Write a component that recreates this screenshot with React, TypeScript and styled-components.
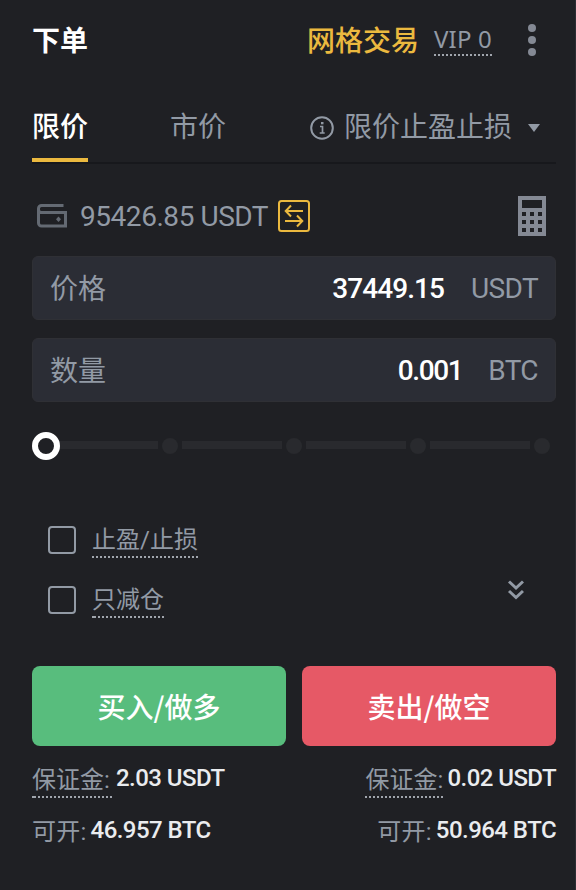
import React from "react";
import styled, { createGlobalStyle } from "styled-components";

const MUTED = "#929aa5";
const GOLD = "#ebb93f";

const Global = createGlobalStyle`
  * { box-sizing: border-box; }
  body { margin: 0; background: #1f2024; }
  button { font: inherit; border: 0; padding: 0; background: none; color: inherit; }
  svg { display: block; flex: none; }
`;

const Panel = styled.main`
  width: 576px;
  height: 890px;
  padding: 0 19px 0 32px;
  border-right: 1px solid #2b2d33;
  background: #1f2024;
  color: ${MUTED};
  font-family: Roboto, "Noto Sans CJK SC", sans-serif;
  font-size: 28px;
  line-height: 40px;
  overflow: hidden;
  white-space: nowrap;
`;

const Header = styled.header`
  display: flex;
  align-items: center;
  height: 80px;
  padding-right: 19px;
`;

const Title = styled.h1`
  margin: 0 auto 0 0;
  padding-top: 3px;
  color: #fff;
  font-size: 28px;
  font-weight: 700;
`;

const GridLink = styled.span`
  margin-right: 15px;
  padding-top: 4px;
  color: ${GOLD};
  font-weight: 500;
`;

/* Text with a dotted underline; the first dot is doubled when the width is a multiple of four. */
const Dotted = styled.span<{ $w: number; $h?: number; $line?: number }>`
  display: inline-block;
  width: ${(p) => p.$w}px;
  height: ${(p) => p.$h ?? 36}px;
  line-height: ${(p) => p.$line ?? 36}px;
  font-size: 24px;
  background:
    linear-gradient(#a0a5ad, #a0a5ad) left bottom / 2px 2px no-repeat,
    repeating-linear-gradient(90deg, #a0a5ad 0 2px, transparent 2px 4px)
      ${(p) => (p.$w % 4 === 0 ? 2 : 0)}px 100% / 100% 2px no-repeat;
`;

const Vip = styled(Dotted)`
  margin-right: 35px;
  font-family: "Noto Sans", sans-serif;
  letter-spacing: 0.2px;
`;

const Tabs = styled.nav`
  display: flex;
  height: 84px;
  border-bottom: 2px solid #17181c;
`;

const Tab = styled.div<{ $active?: boolean }>`
  width: 56px;
  height: 82px;
  margin-right: 82px;
  padding-top: 28px;
  color: ${(p) => (p.$active ? "#fff" : MUTED)};
  font-weight: ${(p) => (p.$active ? 500 : 400)};
  border-bottom: 4px solid ${(p) => (p.$active ? GOLD : "transparent")};
`;

const StopTab = styled.div`
  display: flex;
  align-items: center;
  height: 40px;
  margin: 28px 0 0 auto;
  padding-right: 16px;
`;

const StopLabel = styled.span`
  margin: 0 16px 0 10px;
`;

const Balance = styled.div`
  display: flex;
  align-items: center;
  height: 40px;
  margin: 32px 10px 20px 5px;
`;

const Amount = styled.span<{ $w: number }>`
  width: ${(p) => p.$w}px;
  margin: 0 9px 0 13px;
  padding-top: 2px;
  letter-spacing: -0.45px;
`;

const Swap = styled.button`
  margin-right: auto;
`;

const Field = styled.label`
  display: flex;
  align-items: center;
  height: 64px;
  margin-bottom: 18px;
  padding: 2px 17px 0;
  border: 1px solid #2f3035;
  border-radius: 6px;
  background: #2b2d35;
`;

const FieldName = styled.span`
  padding-top: 2px;
`;

const FieldValue = styled.span<{ $gap: number; $tracking: number }>`
  margin: 0 ${(p) => p.$gap}px 0 auto;
  color: #fff;
  font-weight: 500;
  letter-spacing: ${(p) => p.$tracking}px;
`;

const Unit = styled.span`
  letter-spacing: -0.6px;
`;

const Slider = styled.div`
  display: flex;
  align-items: center;
  height: 28px;
  margin: 30px 5px 0 0;
`;

const Knob = styled.span`
  width: 28px;
  height: 28px;
  border: 6px solid #fff;
  border-radius: 50%;
`;

const Track = styled.span<{ $first?: boolean }>`
  flex: ${(p) => (p.$first ? "0 0 98px" : "0 0 100px")};
  height: 8px;
  margin: -2px 4px 0 ${(p) => (p.$first ? 0 : 4)}px;
  background: #292a2e;
`;

const Stop = styled.span`
  flex: none;
  width: 16px;
  height: 16px;
  border-radius: 50%;
  background: #292a2e;
`;

const Options = styled.section`
  display: flex;
  align-items: flex-start;
  justify-content: space-between;
  height: 132px;
  margin: 62px 32px 0 16px;
`;

const Checks = styled.div`
  display: flex;
  flex-direction: column;
  gap: 24px;
`;

const Check = styled.label`
  display: flex;
  align-items: flex-start;
  height: 36px;
  gap: 16px;
`;

const Box = styled.span`
  width: 28px;
  height: 28px;
  margin-top: 4px;
  border: 2px solid ${MUTED};
  border-radius: 4px;
`;

const Expand = styled.button`
  margin-top: 58px;
`;

const Actions = styled.div`
  display: grid;
  grid-template-columns: 1fr 1fr;
  gap: 16px;
  margin-top: 12px;
`;

const Action = styled.button<{ $color: string }>`
  height: 80px;
  border-radius: 8px;
  background: ${(p) => p.$color};
  color: #fff;
  font-family: "Noto Sans CJK SC", sans-serif;
  font-weight: 500;
`;

const Summary = styled.div`
  display: flex;
  justify-content: space-between;
  margin-top: 16px;
  font-size: 24px;
  line-height: 36px;
`;

const Column = styled.div<{ $right?: boolean }>`
  display: flex;
  flex-direction: column;
  align-items: ${(p) => (p.$right ? "flex-end" : "flex-start")};
  gap: 16px;
`;

const Line = styled.div`
  display: flex;
  gap: 4px;
  height: 36px;
`;

const Available = styled.span`
  letter-spacing: 0.25px;
`;

const Figure = styled.span`
  color: #eaecef;
  font-weight: 500;
  line-height: 33px;
  letter-spacing: -0.55px;
`;

const Dots = () => (
  <svg width="10" height="34" viewBox="0 0 10 34" fill="#848994">
    {[5, 17, 29].map((y) => <circle key={y} cx="5" cy={y} r="4" />)}
  </svg>
);

const InfoIcon = () => (
  <svg width="24" height="24" viewBox="0 0 24 24" fill="none" stroke={MUTED} strokeWidth="2">
    <circle cx="12" cy="12" r="10.8" />
    <path d="M10 10.5h2.5V17M9.7 17h5" strokeWidth="1.7" />
    <path d="M11 6h2.5v2.3H11z" fill={MUTED} stroke="none" />
  </svg>
);

const WalletIcon = () => (
  <svg width="30" height="24" viewBox="0 0 30 24" fill="none" stroke="#646a73" strokeWidth="3">
    <path d="M26.5 1.5H4.5a3 3 0 0 0-3 3v14.5a3 3 0 0 0 3 3h24V8.5H4.5a3 3 0 0 1-3-3" />
    <path d="M21.5 12.5l2.5 2.7-2.5 2.7-2.5-2.7z" fill="#646a73" stroke="none" />
  </svg>
);

const SwapIcon = () => (
  <svg width="32" height="32" viewBox="0 0 32 32" fill="none" stroke={GOLD} strokeWidth="2">
    <rect x="1" y="1" width="30" height="30" rx="2.5" />
    <path d="M25 11H8M13 5.5L7.7 11l5.3 5.5M7 21h17M19 15.5l5.3 5.5-5.3 5.5" />
  </svg>
);

const CalculatorIcon = () => (
  <svg width="28" height="40" viewBox="0 0 28 40" fill="#848994">
    <rect width="28" height="40" />
    <rect x="4" y="4" width="20" height="8" fill="#1f2024" />
    {[16, 24, 32].map((y) => [4, 12, 20].map((x) => <rect key={`${x}-${y}`} x={x} y={y} width="4" height="4" fill="#1f2024" />))}
  </svg>
);

const ChevronsIcon = () => (
  <svg width="16" height="20" viewBox="0 0 16 20" fill="none" stroke={MUTED} strokeWidth="3">
    <path d="M1 1.5l7 6.5 7-6.5M1 11l7 6.5 7-6.5" />
  </svg>
);

export default function App() {
  return (
    <>
      <Global />
      <Panel>
        <Header>
          <Title>下单</Title>
          <GridLink>网格交易</GridLink>
          <Vip $w={58} $h={32} $line={29}>VIP 0</Vip>
          <Dots />
        </Header>
        <Tabs>
          <Tab $active>限价</Tab>
          <Tab>市价</Tab>
          <StopTab>
            <InfoIcon />
            <StopLabel>限价止盈止损</StopLabel>
            <svg width="12" height="8" viewBox="0 0 12 8"><path d="M0 0h12L6 8z" fill={MUTED} /></svg>
          </StopTab>
        </Tabs>
        <Balance>
          <WalletIcon />
          <Amount $w={189}>95426.85 USDT</Amount>
          <Swap><SwapIcon /></Swap>
          <CalculatorIcon />
        </Balance>
        <Field>
          <FieldName>价格</FieldName>
          <FieldValue $gap={27} $tracking={-0.95}>37449.15</FieldValue>
          <Unit>USDT</Unit>
        </Field>
        <Field>
          <FieldName>数量</FieldName>
          <FieldValue $gap={26} $tracking={-1.4}>0.001</FieldValue>
          <Unit>BTC</Unit>
        </Field>
        <Slider>
          <Knob />
          {[1, 2, 3, 4].map((n) => (
            <React.Fragment key={n}>
              <Track $first={n === 1} />
              <Stop />
            </React.Fragment>
          ))}
        </Slider>
        <Options>
          <Checks>
            <Check><Box /><Dotted $w={106} $line={37}>止盈/止损</Dotted></Check>
            <Check><Box /><Dotted $w={72} $line={37}>只减仓</Dotted></Check>
          </Checks>
          <Expand><ChevronsIcon /></Expand>
        </Options>
        <Actions>
          <Action $color="#58bd7d">买入/做多</Action>
          <Action $color="#e65966">卖出/做空</Action>
        </Actions>
        <Summary>
          <Column>
            <Line><Dotted $w={80}>保证金:</Dotted><Figure>2.03 USDT</Figure></Line>
            <Line><Available>可开:</Available><Figure>46.957 BTC</Figure></Line>
          </Column>
          <Column $right>
            <Line><Dotted $w={78}>保证金:</Dotted><Figure>0.02 USDT</Figure></Line>
            <Line><Available>可开:</Available><Figure>50.964 BTC</Figure></Line>
          </Column>
        </Summary>
      </Panel>
    </>
  );
}
